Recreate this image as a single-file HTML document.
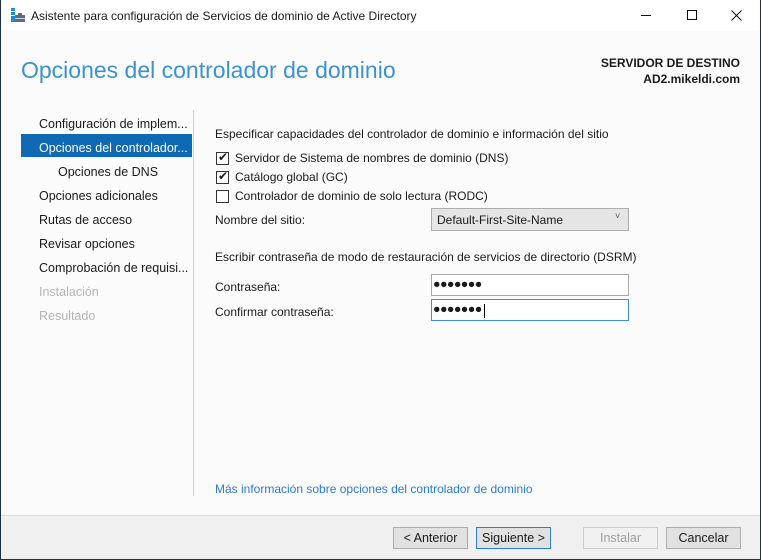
<!DOCTYPE html>
<html><head><meta charset="utf-8"><style>
*{margin:0;padding:0;box-sizing:border-box}
body{width:761px;height:560px;overflow:hidden;background:#1c3048;font-family:"Liberation Sans",sans-serif;font-size:12px;color:#1a1a1a;position:relative}
.win{position:absolute;left:1px;top:0;width:759px;height:559px;background:#fbfbfb}
.title{position:absolute;left:0;top:0;width:759px;height:31px;background:#fff}
.abs{position:absolute;white-space:nowrap}
.nav{position:absolute;left:38px;font-size:12.5px;color:#1a1a1a}
.chk{position:absolute;left:215px;width:13px;height:13px;border:1px solid #333;background:#fff}
.inp{position:absolute;left:430px;width:198px;height:22px;border:1px solid #a8a8a8;background:#fff}
.btn{position:absolute;top:527px;height:22px;border:1px solid #adadad;background:#e1e1e1;text-align:center;line-height:20px;font-size:12.5px}
.dots{position:absolute;left:432px;font-size:12.5px;letter-spacing:-0.6px;font-weight:bold}
</style></head><body>
<div class="win">
<div class="title">
<svg class="abs" style="left:9px;top:8px" width="16" height="15"><rect x="1" y="0" width="4" height="3" fill="#1e88d8"/><rect x="1" y="4" width="4" height="3" fill="#1e88d8"/><rect x="1" y="8" width="4" height="6" fill="#1e88d8"/><rect x="5" y="7" width="10" height="7" fill="#5a6d80"/><rect x="8" y="5" width="4" height="2" fill="#5a6d80"/><rect x="5" y="10" width="10" height="1" fill="#c8d3de"/></svg>
<div class="abs" style="left:30px;top:9px;font-size:12px">Asistente para configuración de Servicios de dominio de Active Directory</div>
<div class="abs" style="left:640px;top:15px;width:10px;height:1px;background:#111"></div>
<div class="abs" style="left:686px;top:10px;width:10px;height:10px;border:1px solid #111"></div>
<svg class="abs" style="left:730px;top:10px" width="11" height="11"><path d="M0.5 0.5L10.5 10.5M10.5 0.5L0.5 10.5" stroke="#111" stroke-width="1"/></svg>
</div>
<div class="abs" style="left:20px;top:57px;font-size:23px;color:#3a93cc;font-weight:300">Opciones del controlador de dominio</div>
<div class="abs" style="right:20px;top:55px;font-size:12px;font-weight:bold;text-align:right;line-height:16px;color:#1a1a1a">SERVIDOR DE DESTINO<br>AD2.mikeldi.com</div>
<div class="abs" style="left:20px;top:134px;width:171px;height:23px;background:#0f69b4"></div>
<div class="nav" style="top:117px">Configuración de implem...</div>
<div class="nav" style="top:141px;color:#fff">Opciones del controlador...</div>
<div class="nav" style="top:165px;left:57px">Opciones de DNS</div>
<div class="nav" style="top:189px">Opciones adicionales</div>
<div class="nav" style="top:213px">Rutas de acceso</div>
<div class="nav" style="top:237px">Revisar opciones</div>
<div class="nav" style="top:261px">Comprobación de requisi...</div>
<div class="nav" style="top:285px;color:#b5b5b5">Instalación</div>
<div class="nav" style="top:309px;color:#b5b5b5">Resultado</div>
<div class="abs" style="left:192px;top:110px;width:1px;height:386px;background:#cfcfcf"></div>
<div class="abs" style="left:214px;top:127px">Especificar capacidades del controlador de dominio e información del sitio</div>
<div class="chk" style="top:152px"></div><div class="abs" style="left:217px;top:150px;font-size:12px">✔</div>
<div class="abs" style="left:234px;top:151px">Servidor de Sistema de nombres de dominio (DNS)</div>
<div class="chk" style="top:171px"></div><div class="abs" style="left:217px;top:169px;font-size:12px">✔</div>
<div class="abs" style="left:234px;top:170px">Catálogo global (GC)</div>
<div class="chk" style="top:190px"></div>
<div class="abs" style="left:234px;top:189px">Controlador de dominio de solo lectura (RODC)</div>
<div class="abs" style="left:214px;top:213px">Nombre del sitio:</div>
<div class="abs" style="left:430px;top:208px;width:198px;height:23px;border:1px solid #adadad;background:#e5e5e5"></div>
<div class="abs" style="left:436px;top:213px">Default-First-Site-Name</div>
<div class="abs" style="left:614px;top:211px;font-size:9px;color:#555">˅</div>
<div class="abs" style="left:214px;top:250px">Escribir contraseña de modo de restauración de servicios de directorio (DSRM)</div>
<div class="abs" style="left:214px;top:280px">Contraseña:</div>
<div class="inp" style="top:274px"></div>
<div class="dots" style="top:277px">●●●●●●●</div>
<div class="abs" style="left:214px;top:305px">Confirmar contraseña:</div>
<div class="inp" style="top:299px;border-color:#3c8fdc"></div>
<div class="dots" style="top:302px">●●●●●●●</div>
<div class="abs" style="left:483px;top:304px;width:1px;height:14px;background:#000"></div>
<div class="abs" style="left:214px;top:482px;color:#2b7cd3">Más información sobre opciones del controlador de dominio</div>
<div class="abs" style="left:0;top:515px;width:759px;height:44px;background:#f0f0f0;border-top:1px solid #dcdcdc"></div>
<div class="btn" style="left:392px;width:75px">&lt; Anterior</div>
<div class="btn" style="left:475px;width:75px;border-color:#2c7fd4">Siguiente &gt;</div>
<div class="btn" style="left:582px;width:75px;background:#f0f0f0;border-color:#cdcdcd;color:#a0a0a0">Instalar</div>
<div class="btn" style="left:665px;width:75px">Cancelar</div>
</div>
</body></html>
